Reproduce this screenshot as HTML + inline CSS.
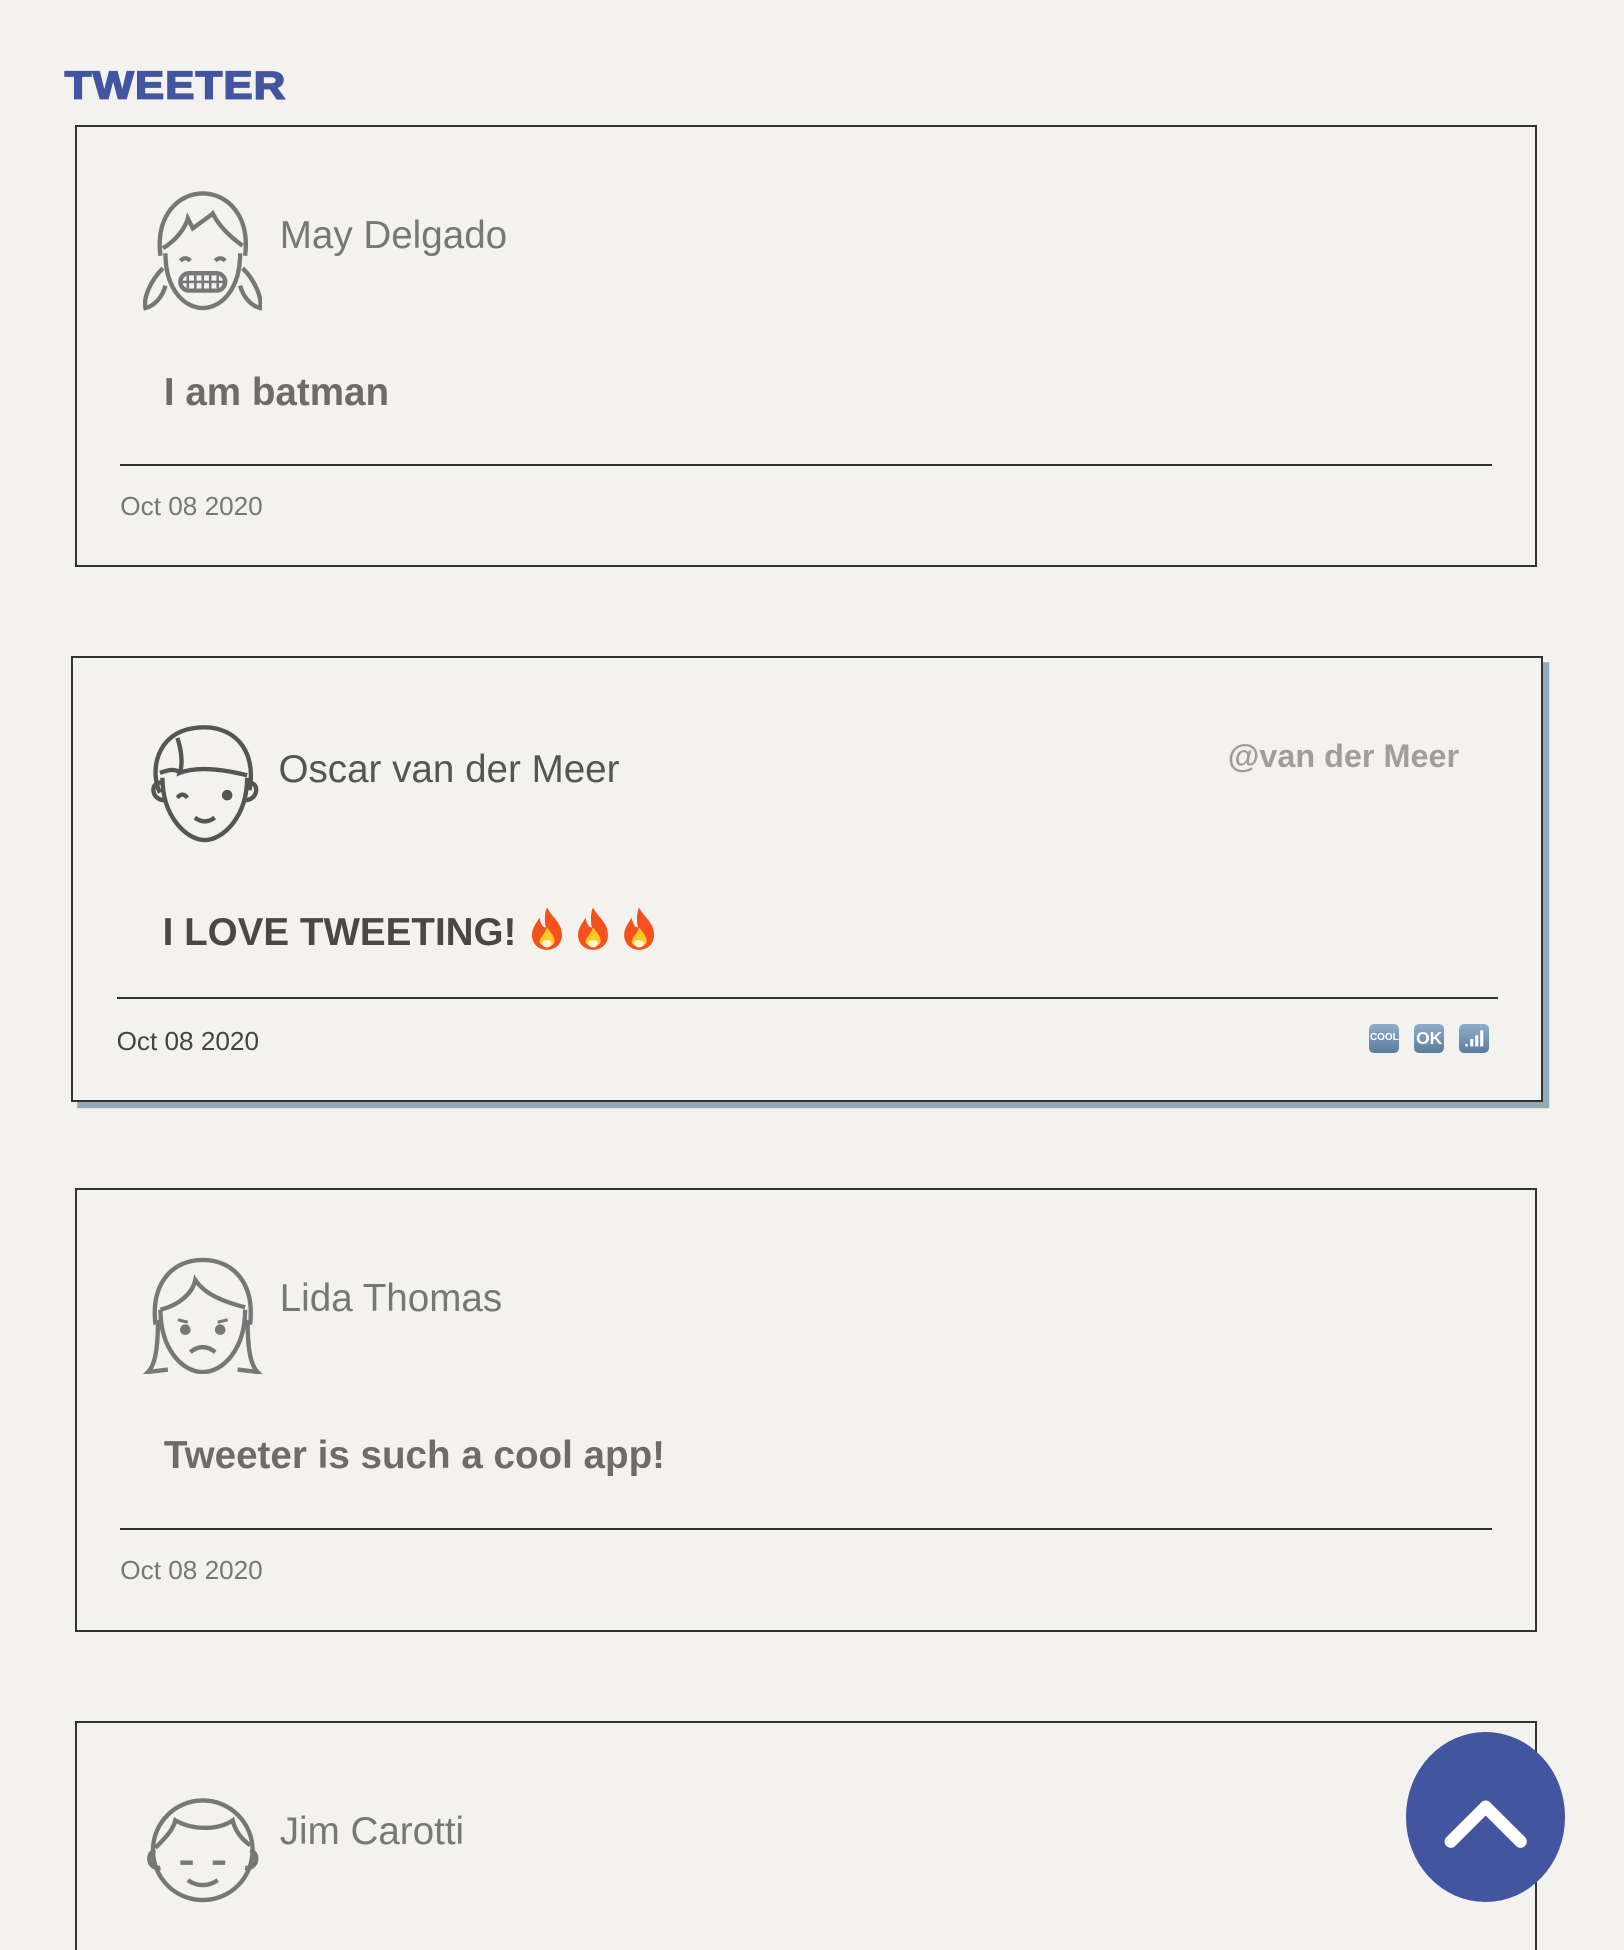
<!DOCTYPE html>
<html><head><meta charset="utf-8"><style>
html,body{margin:0;padding:0;background:#f3f2ee;}
html{overflow:hidden;height:1950px;}
body{width:1624px;height:1950px;overflow:hidden;}
#w{zoom:1.2454;width:1304px;height:1566px;position:relative;overflow:hidden;font-family:"Liberation Sans",sans-serif;}
.t{position:absolute;left:52px;top:50px;font-weight:900;font-size:35px;color:#4355a0;letter-spacing:1px;transform:scaleY(0.9);-webkit-text-stroke:1.5px #4355a0;}
.card{position:absolute;left:60px;width:1171px;border:2px solid #333;box-sizing:content-box;}
.card.s{left:57px;width:1179px;box-shadow:5px 5px 0 #91aab6;}
.av{position:absolute;left:53px;top:52px;width:96px;height:96px;}
.nm{position:absolute;left:163px;top:70px;font-size:31px;color:#777;font-weight:300;}
.tx{position:absolute;left:70px;top:196px;font-size:31px;font-weight:bold;color:#6f6c68;}
.ln{position:absolute;left:35px;right:35px;top:271px;border-top:2px solid #333;}
.dt{position:absolute;left:35px;top:293px;font-size:21px;color:#777;}
.s .nm{color:#555}.s .tx{color:#4a4845}.s .dt{color:#444}
.hd{position:absolute;right:66px;top:64px;font-size:26px;font-weight:bold;color:#a09e99;}
.ic{position:absolute;top:294px;width:24px;height:23px;border-radius:4px;background:linear-gradient(#8eaecb,#5b7c9c);color:#fff;font-size:14px;font-weight:bold;text-align:center;line-height:23px;}
.btn{position:absolute;left:1129px;top:1391px;width:128px;height:136px;border-radius:50%;background:#4355a0;}
</style></head><body><div id="w">
<div class="t">TWEETER</div>

<div class="card" style="top:100px;height:352px">
<svg class="av" viewBox="0 0 96 96" fill="none" stroke="#777" stroke-width="3.5">
<path d="M14 52 C10 20 28 2 48 2 C68 2 86 20 82 52"/>
<path d="M16 46 C26 40 34 30 36 22 L40 30 C48 24 54 20 56 18 C62 30 72 38 80 44"/>
<path d="M18 50 C18 80 34 94 48 94 C62 94 78 80 78 50"/>
<path d="M16 62 C6 72 0 86 2 94 C10 92 16 84 18 76"/><path d="M80 62 C90 72 96 86 94 94 C86 92 80 84 78 76"/>
<path d="M30 56 q4 -4 8 0 M58 56 q4 -4 8 0"/>
<rect x="30" y="66" width="36" height="14" rx="7"/><path d="M36 68v10M42 67v12M48 67v12M54 67v12M60 68v10M31 73h34" stroke-width="2"/>
</svg>
<div class="nm">May Delgado</div>
<div class="tx">I am batman</div>
<div class="ln"></div>
<div class="dt">Oct 08 2020</div>
</div>

<div class="card s" style="top:527px;height:355px">
<svg class="av" style="left:58px" viewBox="0 0 96 96" fill="none" stroke="#555" stroke-width="3.5">
<path d="M12 56 C4 40 8 8 40 4 C70 0 90 20 84 54"/>
<path d="M26 12 C30 24 30 34 28 40 C44 34 66 38 82 42"/><path d="M12 40 C18 38 24 36 28 40"/>
<path d="M14 48 C4 46 4 62 16 62 M82 48 C92 46 92 62 80 62"/>
<path d="M14 44 C14 76 34 94 48 94 C62 94 82 76 82 44"/>
<path d="M26 60 q4 -5 8 0"/><circle cx="66" cy="58" r="2.5" fill="#555"/><path d="M40 76 q8 6 16 0"/>
</svg>
<div class="nm" style="left:165px;top:72px">Oscar van der Meer</div>
<div class="hd">@van der Meer</div>
<div class="tx" style="left:72px;top:198px">I LOVE TWEETING! <svg width="110" height="36" viewBox="0 0 110 36" style="vertical-align:-4px"><g id="f"><path d="M16 2 C20 10 28 14 28 24 C28 32 22 36 16 36 C9 36 4 31 4 24 C4 18 8 14 10 10 C11 16 13 18 15 18 C14 12 14 6 16 2Z" fill="#f4511e"/><path d="M16 18 C19 22 23 26 22 30 C21 34 11 34 10 30 C10 26 14 24 16 18Z" fill="#ffca28"/><ellipse cx="16" cy="31" rx="4" ry="3" fill="#fff6d0"/></g><use href="#f" x="37"/><use href="#f" x="74"/></svg></div>
<div class="ln" style="top:272px"></div>
<div class="dt" style="top:295px">Oct 08 2020</div>
<div class="ic" style="left:1041px;font-size:8px">COOL</div>
<div class="ic" style="left:1077px">OK</div>
<div class="ic" style="left:1113px"><svg width="24" height="23"><g fill="#fff"><rect x="5" y="16" width="2" height="2"/><rect x="9" y="12" width="2.5" height="6"/><rect x="13" y="9" width="2.5" height="9"/><rect x="17" y="5" width="2.5" height="13"/></g></svg></div>
</div>

<div class="card" style="top:954px;height:353px">
<svg class="av" viewBox="0 0 96 96" fill="none" stroke="#777" stroke-width="3.5">
<path d="M10 56 C6 22 24 4 48 4 C72 4 90 22 86 56"/>
<path d="M14 44 C30 40 40 30 42 20 C50 32 66 38 82 42"/>
<path d="M14 44 C14 76 32 94 48 94 C64 94 82 76 82 44"/>
<path d="M12 52 C12 74 10 88 4 94 L20 92 M84 52 C84 74 86 88 92 94 L76 92"/>
<circle cx="34" cy="60" r="2.5" fill="#777"/><circle cx="62" cy="60" r="2.5" fill="#777"/><path d="M38 78 q10 -8 20 0"/>
<path d="M28 52 l8 2 M68 52 l-8 2" stroke-width="2.5"/>
</svg>
<div class="nm">Lida Thomas</div>
<div class="tx">Tweeter is such a cool app!</div>
<div class="ln"></div>
<div class="dt">Oct 08 2020</div>
</div>

<div class="card" style="top:1382px;height:182px;border-bottom:none">
<svg class="av" viewBox="0 0 96 96" fill="none" stroke="#777" stroke-width="3.5">
<circle cx="48" cy="50" r="40"/>
<path d="M10 48 C18 40 24 34 26 26 C40 34 60 34 72 26 C74 34 78 40 86 46"/>
<path d="M30 60 h10 M56 60 h10"/><path d="M36 74 q12 8 24 0"/>
<path d="M10 50 C2 52 4 66 14 64 M86 50 C94 52 92 66 82 64"/>
</svg>
<div class="nm">Jim Carotti</div>
</div>

<div class="btn"><svg width="128" height="136" viewBox="0 0 128 136"><path d="M36 88 L64 60 L92 88" fill="none" stroke="#fff" stroke-width="10" stroke-linecap="round" stroke-linejoin="round"/></svg></div>
</div></body></html>
